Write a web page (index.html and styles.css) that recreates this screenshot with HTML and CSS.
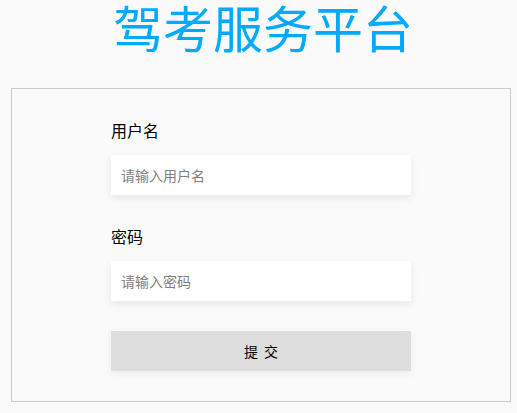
FILE: index.html
```html
<!DOCTYPE html>
<html lang="zh">
<head>
<meta charset="utf-8">
<title>驾考服务平台</title>
<link rel="stylesheet" href="styles.css">
</head>
<body>
<h1 class="title">驾考服务平台</h1>
<div class="panel">
  <form class="form">
    <label class="label" for="user">用户名</label>
    <input class="field" id="user" type="text" placeholder="请输入用户名">
    <label class="label label-gap" for="pass">密码</label>
    <input class="field" id="pass" type="password" placeholder="请输入密码">
    <button class="submit" type="button">提 交</button>
  </form>
</div>
</body>
</html>
```
FILE: styles.css
```css
html, body {
  margin: 0;
  padding: 0;
  background: #fafafa;
}
body {
  font-family: "Noto Sans CJK SC", "Noto Sans", sans-serif;
  padding: 0 6px 0 11px;
}
.title {
  margin: 0;
  text-align: center;
  font-size: 50px;
  font-weight: normal;
  line-height: 52px;
  color: #00aaff;
  padding-left: 4px;
}
.panel {
  box-sizing: border-box;
  width: 500px;
  height: 314px;
  margin-top: 36px;
  border: 1px solid #cccccc;
  display: flex;
  justify-content: center;
}
.form {
  width: 300px;
  display: flex;
  flex-direction: column;
  padding-top: 29px;
}
.label {
  font-size: 16px;
  line-height: 24px;
  color: #000;
  margin-bottom: 13px;
}
.label-gap {
  margin-top: 29px;
}
.field {
  box-sizing: border-box;
  height: 40px;
  width: 300px;
  border: none;
  outline: none;
  background: #fff;
  padding: 0 10px;
  font-family: inherit;
  font-size: 14px;
  box-shadow: 0 3px 8px rgba(0,0,0,0.08);
}
.field::placeholder {
  color: #808080;
}
.submit {
  margin-top: 30px;
  height: 40px;
  width: 300px;
  border: none;
  background: #dddddd;
  font-family: inherit;
  font-size: 14px;
  word-spacing: 3px;
  color: #000;
  box-shadow: 0 3px 8px rgba(0,0,0,0.06);
}
```
